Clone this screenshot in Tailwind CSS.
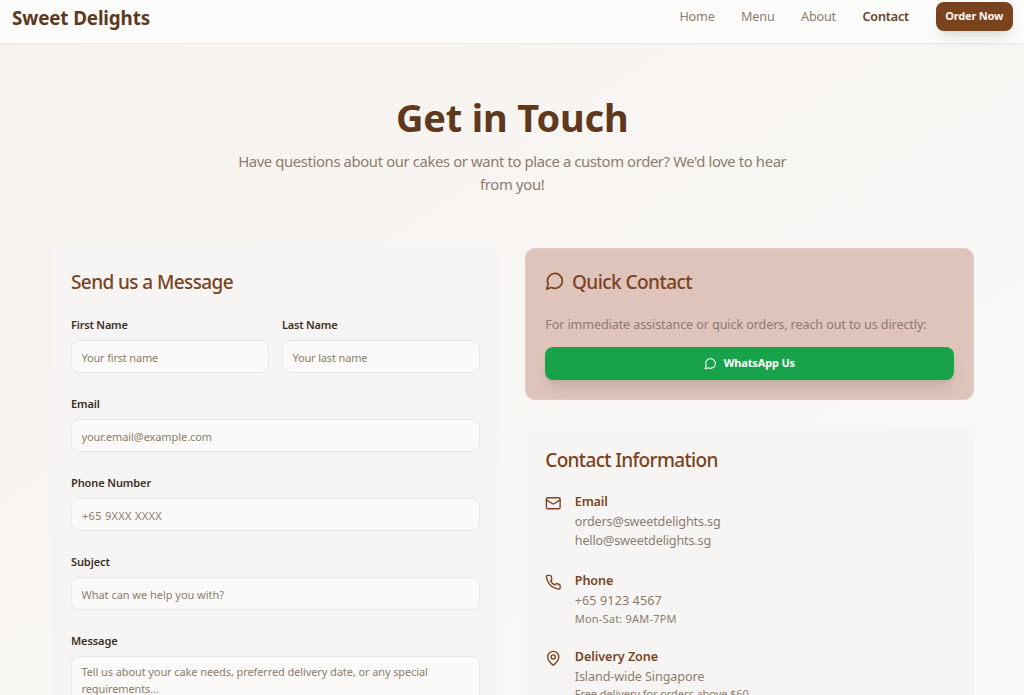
<!DOCTYPE html>
<html lang="en">
<head>
  <meta charset="UTF-8">
  <meta name="viewport" content="width=device-width, initial-scale=1.0">
  <title>Sweet Delights - Contact</title>
  <script src="https://cdn.jsdelivr.net/npm/@tailwindcss/browser@4"></script>
</head>
<body class="h-screen overflow-hidden bg-linear-to-br from-[#f6f2ed] via-[#f8f6f3] to-[#fafaf8] font-['Noto_Sans','Open_Sans',sans-serif] text-[#8d7c6d]">

  <!-- Header -->
  <header class="h-[43.5px] bg-[#fcfcfa] border-b border-[#eceae6] pl-3 pr-[11px] pb-[9px] flex items-center justify-between">
    <a href="#" class="pt-0.5 text-[18.8px] tracking-[-0.12px] font-bold text-[#5f3820] whitespace-nowrap">Sweet Delights</a>
    <nav class="flex items-center gap-[26.5px] text-[12.6px] tracking-[-0.17px] whitespace-nowrap">
      <a href="#" class="pt-0.5">Home</a>
      <a href="#" class="pt-0.5">Menu</a>
      <a href="#" class="pt-0.5">About</a>
      <a href="#" class="pt-0.5 font-semibold text-[#6b4226]">Contact</a>
      <a href="#" class="w-[77.5px] h-[29.5px] -mt-px rounded-[8px] bg-[#7b431d] text-[#fbf7f2] text-[11px] font-bold flex items-center justify-center shadow-lg">Order Now</a>
    </nav>
  </header>

  <main class="w-[922.5px] ml-[51px]">
    <!-- Page title -->
    <div class="h-[204.5px] pt-[53px] text-center">
      <h1 class="text-[38px] leading-[41px] tracking-[-0.15px] font-bold text-[#5f3820]">Get in Touch</h1>
      <p class="mt-[12.5px] text-[14.8px] leading-[23px] tracking-[-0.36px]">Have questions about our cakes or want to place a custom order? We'd love to hear<br><span class="tracking-[-0.3px]">from you!</span></p>
    </div>

    <div class="grid grid-cols-2 gap-[26px] items-start">
      <!-- Message form -->
      <form class="h-[600px] rounded-[10px] bg-[#f6f5f4] pl-5 pr-[19.5px] pt-[22px]">
        <h2 class="text-[19px] leading-6 tracking-[-0.6px] font-medium text-[#7b431d]">Send us a Message</h2>
        <div class="mt-[21px] flex flex-col gap-[22px] text-[11px] tracking-[-0.1px]">
          <div class="grid grid-cols-2 gap-[13px]">
            <div>
              <label for="first" class="block h-[25px] leading-[19px] font-semibold text-[#3d3027] tracking-[-0.2px]">First Name</label>
              <input id="first" placeholder="Your first name" class="block w-full h-[33px] rounded-[8px] border border-[#eae8e5] bg-[#fbfaf8] px-[9.5px] pt-px tracking-[-0.18px] placeholder:text-[#8d7c6d]">
            </div>
            <div>
              <label for="last" class="block h-[25px] leading-[19px] font-semibold text-[#3d3027] tracking-[-0.2px]">Last Name</label>
              <input id="last" placeholder="Your last name" class="block w-full h-[33px] rounded-[8px] border border-[#eae8e5] bg-[#fbfaf8] px-[9.5px] pt-px tracking-[-0.15px] placeholder:text-[#8d7c6d]">
            </div>
          </div>
          <div>
            <label for="email" class="block h-[24px] leading-[17px] font-semibold text-[#3d3027]">Email</label>
            <input id="email" placeholder="your.email@example.com" class="block w-full h-[33px] rounded-[8px] border border-[#eae8e5] bg-[#fbfaf8] px-[9.5px] pt-px tracking-[-0.08px] placeholder:text-[#8d7c6d]">
          </div>
          <div>
            <label for="phone" class="block h-[24px] leading-[17px] font-semibold text-[#3d3027]">Phone Number</label>
            <input id="phone" placeholder="+65 9XXX XXXX" class="block w-full h-[33px] rounded-[8px] border border-[#eae8e5] bg-[#fbfaf8] px-2.5 pt-px tracking-[0.3px] placeholder:text-[#8d7c6d]">
          </div>
          <div>
            <label for="subject" class="block h-[24px] leading-[17px] font-semibold text-[#3d3027]">Subject</label>
            <input id="subject" placeholder="What can we help you with?" class="block w-full h-[33px] rounded-[8px] border border-[#eae8e5] bg-[#fbfaf8] px-[9.5px] pt-px tracking-[-0.03px] placeholder:text-[#8d7c6d]">
          </div>
          <div>
            <label for="message" class="block h-[24px] leading-[17px] font-semibold text-[#3d3027]">Message</label>
            <textarea id="message" placeholder="Tell us about your cake needs, preferred delivery date, or any special requirements..." class="block w-full h-[100px] resize-none rounded-[8px] border border-[#eae8e5] bg-[#fbfaf8] px-[9.5px] pt-[7px] leading-[16.5px] tracking-[-0.1px] placeholder:text-[#8d7c6d]"></textarea>
          </div>
        </div>
      </form>

      <div class="flex flex-col gap-[26px]">
        <!-- Quick contact -->
        <section class="h-[151.5px] rounded-[10px] border border-[#e3cac3] bg-[#dfc4bb] px-[19px] pt-[21px]">
          <h2 class="flex items-center gap-[7px] text-[19px] leading-6 tracking-[-0.55px] font-medium text-[#7b431d]">
            <svg class="size-[19.75px] -mt-0.5" viewBox="0 0 24 24" fill="none" stroke="currentColor" stroke-width="2" stroke-linecap="round" stroke-linejoin="round"><path d="M7.9 20A9 9 0 1 0 4 16.1L2 22Z"/></svg>
            Quick Contact
          </h2>
          <p class="mt-[20.5px] text-[12.6px] leading-5 tracking-[-0.11px]">For immediate assistance or quick orders, reach out to us directly:</p>
          <a href="#" class="mt-[12px] h-[33px] rounded-[8px] bg-[#18a34a] text-white text-[11px] tracking-[-0.15px] font-bold flex items-center justify-center gap-[7px] shadow-lg">
            <svg class="size-[13px]" viewBox="0 0 24 24" fill="none" stroke="currentColor" stroke-width="2" stroke-linecap="round" stroke-linejoin="round"><path d="M7.9 20A9 9 0 1 0 4 16.1L2 22Z"/></svg>
            WhatsApp Us
          </a>
        </section>

        <!-- Contact information -->
        <section class="h-[400px] rounded-[10px] bg-[#f6f5f4] px-5 pt-[22px]">
          <h2 class="text-[19px] leading-6 tracking-[-0.67px] font-medium text-[#7b431d]">Contact Information</h2>
          <div class="mt-[20.5px] flex flex-col gap-5 text-[12.6px] leading-[19.7px] tracking-[-0.15px]">
            <div class="flex gap-[13px]">
              <svg class="mt-[2.5px] size-[16.5px] text-[#7b431d]" viewBox="0 0 24 24" fill="none" stroke="currentColor" stroke-width="2" stroke-linecap="round" stroke-linejoin="round"><rect width="20" height="16" x="2" y="4" rx="2"/><path d="m22 7-8.97 5.7a1.94 1.94 0 0 1-2.06 0L2 7"/></svg>
              <div>
                <h3 class="font-semibold text-[#7b431d]">Email</h3>
                <p>orders@sweetdelights.sg</p>
                <p>hello@sweetdelights.sg</p>
              </div>
            </div>
            <div class="flex gap-[13px]">
              <svg class="mt-[2.5px] size-[16.5px] text-[#7b431d]" viewBox="0 0 24 24" fill="none" stroke="currentColor" stroke-width="2" stroke-linecap="round" stroke-linejoin="round"><path d="M22 16.92v3a2 2 0 0 1-2.18 2 19.79 19.79 0 0 1-8.63-3.07 19.5 19.5 0 0 1-6-6 19.79 19.79 0 0 1-3.07-8.67A2 2 0 0 1 4.11 2h3a2 2 0 0 1 2 1.72 12.84 12.84 0 0 0 .7 2.81 2 2 0 0 1-.45 2.11L8.09 9.91a16 16 0 0 0 6 6l1.27-1.27a2 2 0 0 1 2.11-.45 12.84 12.84 0 0 0 2.81.7A2 2 0 0 1 22 16.92z"/></svg>
              <div>
                <h3 class="font-semibold text-[#7b431d] tracking-[-0.1px]">Phone</h3>
                <p class="tracking-[0.1px]">+65 9123 4567</p>
                <p class="text-[11px] leading-[16.5px] tracking-[0.2px]">Mon-Sat: 9AM-7PM</p>
              </div>
            </div>
            <div class="flex gap-[13px]">
              <svg class="mt-[2.5px] size-[16.5px] text-[#7b431d]" viewBox="0 0 24 24" fill="none" stroke="currentColor" stroke-width="2" stroke-linecap="round" stroke-linejoin="round"><path d="M20 10c0 6-8 12-8 12s-8-6-8-12a8 8 0 0 1 16 0Z"/><circle cx="12" cy="10" r="3"/></svg>
              <div>
                <h3 class="font-semibold text-[#7b431d] tracking-[-0.05px]">Delivery Zone</h3>
                <p class="tracking-[-0.1px]">Island-wide Singapore</p>
                <p class="text-[11px] leading-[16.5px] tracking-[-0.06px]">Free delivery for orders above $60</p>
              </div>
            </div>
          </div>
        </section>
      </div>
    </div>
  </main>

</body>
</html>
